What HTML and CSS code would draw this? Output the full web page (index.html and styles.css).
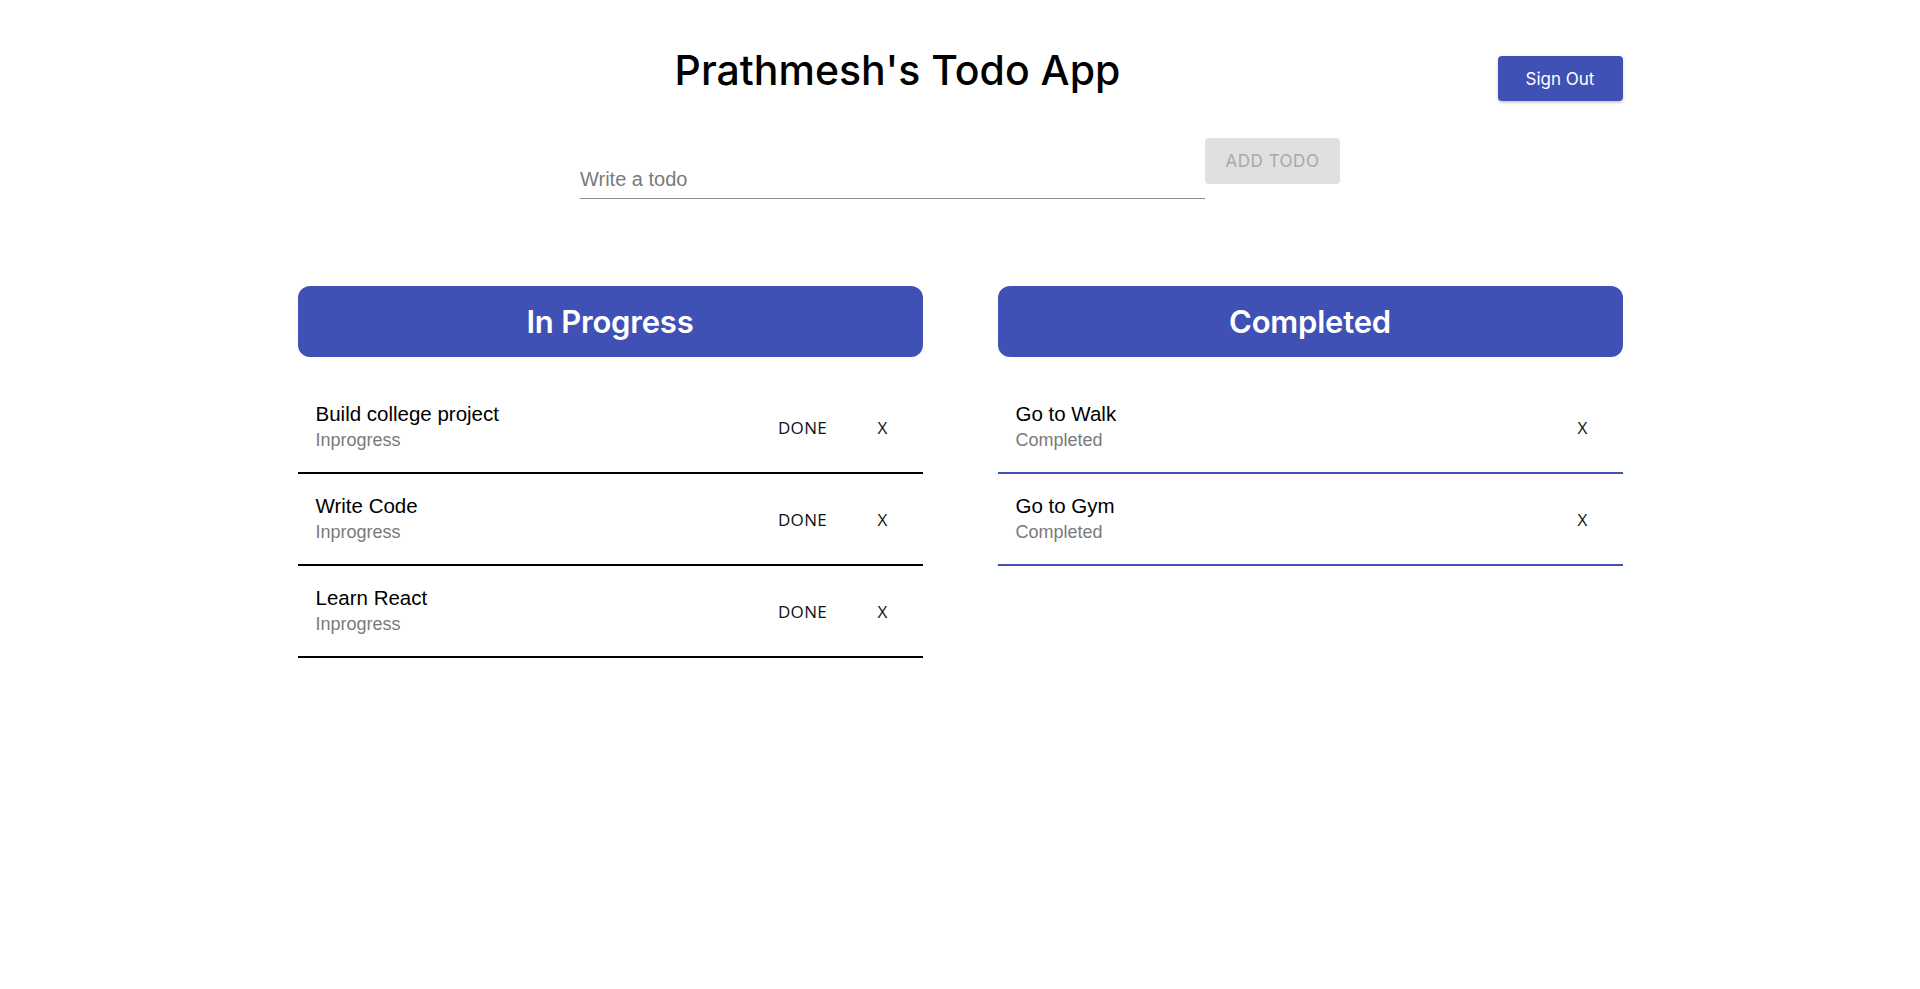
FILE: index.html
```html
<!DOCTYPE html>
<html lang="en">
<head>
<meta charset="utf-8">
<title>Prathmesh's Todo App</title>
<link rel="stylesheet" href="styles.css">
</head>
<body>
<div class="page">
  <header class="top">
    <h1 class="title">Prathmesh's Todo App</h1>
    <button class="signout">Sign Out</button>
  </header>

  <div class="add-row">
    <div class="field">
      <input class="field-input" type="text" placeholder="Write a todo">
    </div>
    <button class="add-btn" disabled>ADD TODO</button>
  </div>

  <div class="columns">
    <section class="column">
      <h2 class="col-head">In Progress</h2>
      <ul class="list">
        <li class="item item-progress">
          <div class="item-text">
            <div class="item-title">Build college project</div>
            <div class="item-sub">Inprogress</div>
          </div>
          <button class="act act-done">DONE</button>
          <button class="act act-x">X</button>
        </li>
        <li class="item item-progress">
          <div class="item-text">
            <div class="item-title">Write Code</div>
            <div class="item-sub">Inprogress</div>
          </div>
          <button class="act act-done">DONE</button>
          <button class="act act-x">X</button>
        </li>
        <li class="item item-progress">
          <div class="item-text">
            <div class="item-title">Learn React</div>
            <div class="item-sub">Inprogress</div>
          </div>
          <button class="act act-done">DONE</button>
          <button class="act act-x">X</button>
        </li>
      </ul>
    </section>

    <section class="column">
      <h2 class="col-head">Completed</h2>
      <ul class="list">
        <li class="item item-done">
          <div class="item-text">
            <div class="item-title">Go to Walk</div>
            <div class="item-sub">Completed</div>
          </div>
          <button class="act act-x">X</button>
        </li>
        <li class="item item-done">
          <div class="item-text">
            <div class="item-title">Go to Gym</div>
            <div class="item-sub">Completed</div>
          </div>
          <button class="act act-x">X</button>
        </li>
      </ul>
    </section>
  </div>
</div>
</body>
</html>
```

FILE: styles.css
```css
* { box-sizing: border-box; }

html, body {
  margin: 0;
  padding: 0;
  background: #ffffff;
}

body {
  font-family: "Liberation Sans", Arial, sans-serif;
  color: #000;
}

.page {
  width: 1325px;
  margin: 0 auto;
}

.top {
  display: flex;
  align-items: flex-start;
  padding-top: 40px;
}

.title {
  flex: 1;
  margin: 0;
  text-align: center;
  font-family: Inter, "Open Sans", sans-serif;
  font-weight: 500;
  font-size: 41px;
  line-height: 60px;
  color: #000;
}

.signout {
  margin-top: 16px;
  width: 125px;
  height: 45px;
  border: none;
  border-radius: 4px;
  background: #3f51b5;
  color: #fff;
  font-family: Inter, "Open Sans", sans-serif;
  font-size: 17px;
  font-weight: 400;
  box-shadow: 0 2px 2px rgba(0,0,0,0.12), 0 1px 4px rgba(0,0,0,0.1);
}

.add-row {
  display: flex;
  justify-content: center;
  align-items: flex-start;
  margin-top: 37px;
}

.field {
  width: 625px;
  margin-top: 23px;
  border-bottom: 1px solid #8c8c8c;
}

.field-input {
  display: block;
  width: 100%;
  height: 37px;
  border: none;
  outline: none;
  padding: 0;
  font-family: "Liberation Sans", Arial, sans-serif;
  font-size: 20px;
  color: #000;
  background: transparent;
}

.field-input::placeholder {
  color: #7a7a7a;
  opacity: 1;
}

.add-btn {
  width: 135px;
  height: 46px;
  border: none;
  border-radius: 4px;
  background: #e0e0e0;
  color: #a8a8a8;
  font-family: Inter, "Open Sans", sans-serif;
  font-size: 17px;
  letter-spacing: 0.5px;
}

.columns {
  display: grid;
  grid-template-columns: 625px 625px;
  column-gap: 75px;
  margin-top: 87px;
}

.col-head {
  margin: 0;
  height: 71px;
  border-radius: 12px;
  background: #3f51b5;
  color: #fff;
  font-family: Inter, "Open Sans", sans-serif;
  font-weight: 600;
  font-size: 31px;
  line-height: 71px;
  text-align: center;
  letter-spacing: -0.2px;
}

.list {
  list-style: none;
  margin: 25px 0 0;
  padding: 0;
}

.item {
  display: flex;
  align-items: center;
  padding: 19px 8px 19px 18px;
}

.item-progress { border-bottom: 2px solid #000; }
.item-done { border-bottom: 2px solid #3f51b5; }

.item-text { flex: 1; }

.item-title {
  font-size: 20.5px;
  line-height: 26px;
  color: #000;
}

.item-sub {
  font-size: 18px;
  line-height: 26px;
  color: #7a7a7a;
}

.act {
  border: none;
  background: transparent;
  padding: 0;
  height: 36px;
  font-family: "Open Sans", "Noto Sans", sans-serif;
  font-size: 17px;
  color: #111;
}

.act-done { width: 96px; letter-spacing: 0.3px; }
.act-x { width: 64px; }
```
